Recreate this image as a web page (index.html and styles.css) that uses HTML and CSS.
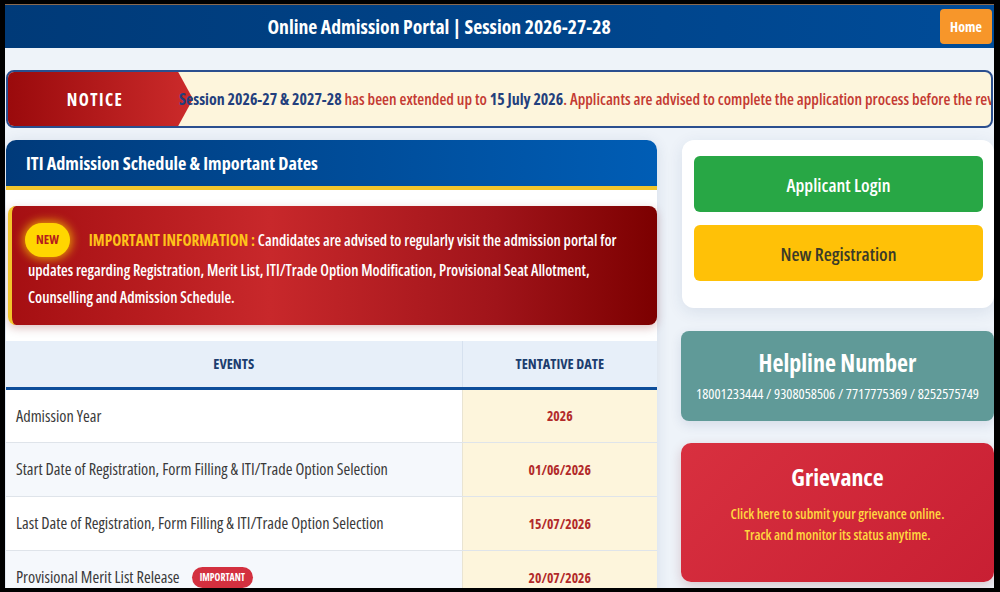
FILE: index.html
```html
<!DOCTYPE html>
<html lang="en">
<head>
  <meta charset="UTF-8" />
  <title>Online Admission Portal</title>
  <meta name="viewport" content="width=device-width, initial-scale=1.0" />
  <link rel="stylesheet" href="styles.css">
</head>
<body>
  <div class="frame">
    <header class="topbar">
      <h1 class="portal-title">Online Admission Portal | Session 2026-27-28</h1>
      <a href="#" class="home-btn">Home</a>
    </header>

    <main class="page">
      <!-- notice strip -->
      <div class="notice">
        <div class="notice-label">NOTICE</div>
        <div class="notice-text">
          <b class="hl">Session 2026-27 &amp; 2027-28</b> has been extended up to <b class="hl">15 July 2026</b>. Applicants are advised to complete the application process before the revised last date.
        </div>
      </div>

      <div class="content">
        <section class="schedule">
          <div class="schedule-head">ITI Admission Schedule &amp; Important Dates</div>

          <div class="info-box">
            <span class="new-badge">NEW</span>
            <span class="info-title">IMPORTANT INFORMATION :</span> Candidates are advised to regularly visit the admission portal for updates regarding Registration, Merit List, ITI/Trade Option Modification, Provisional Seat Allotment, Counselling and Admission Schedule.
          </div>

          <table class="dates">
            <thead>
              <tr><th>Events</th><th class="col-date">Tentative Date</th></tr>
            </thead>
            <tbody>
              <tr><td>Admission Year</td><td class="date">2026</td></tr>
              <tr><td>Start Date of Registration, Form Filling &amp; ITI/Trade Option Selection</td><td class="date">01/06/2026</td></tr>
              <tr><td>Last Date of Registration, Form Filling &amp; ITI/Trade Option Selection</td><td class="date">15/07/2026</td></tr>
              <tr><td>Provisional Merit List Release <span class="imp-badge">Important</span></td><td class="date">20/07/2026</td></tr>
            </tbody>
          </table>
        </section>

        <aside class="side">
          <div class="login-card">
            <a href="#" class="btn btn-green">Applicant Login</a>
            <a href="#" class="btn btn-yellow">New Registration</a>
          </div>

          <div class="helpline">
            <h2>Helpline Number</h2>
            <p>18001233444 / 9308058506 / 7717775369 / 8252575749</p>
          </div>

          <a href="#" class="grievance">
            <h2>Grievance</h2>
            <p>Click here to submit your grievance online.</p>
            <p>Track and monitor its status anytime.</p>
          </a>
        </aside>
      </div>
    </main>
  </div>
</body>
</html>
```

FILE: styles.css
```css
* { box-sizing: border-box; margin: 0; padding: 0; }

body {
  font-family: 'Open Sans', 'Noto Sans', sans-serif;
  font-stretch: 75%;
  background: #000;
  color: #333;
}

.frame {
  margin: 4px 6px 0 5px;
  height: 584px;
  overflow: hidden;
  border-top: 1px solid #8a6a50;
  background: #eef3f9;
}

.topbar {
  height: 43px;
  display: flex;
  align-items: center;
  background: linear-gradient(90deg, #003a78, #004c99);
}

.portal-title {
  flex: 1;
  text-align: center;
  color: #fff;
  font-size: 19.7px;
  font-weight: 700;
  margin-right: 67px;
}

.home-btn {
  width: 52px;
  height: 35px;
  margin-right: 2px;
  display: flex;
  align-items: center;
  justify-content: center;
  background: #f7962a;
  border-radius: 4px;
  color: #fff;
  font-size: 14px;
  font-weight: 700;
  text-decoration: none;
}

.page {
  padding: 22px 0 0 1px;
}

/* notice */
.notice {
  position: relative;
  height: 58px;
  margin-right: 1px;
  border: 2px solid #2b4f8f;
  border-radius: 8px;
  background: #fdf5dc;
  overflow: hidden;
  display: flex;
  align-items: center;
}

.notice-label {
  position: absolute;
  left: 0; top: 0;
  width: 185px;
  height: 100%;
  padding-right: 11px;
  display: flex;
  align-items: center;
  justify-content: center;
  background: linear-gradient(90deg, #9a0a0c, #cc2b2b);
  clip-path: polygon(0 0, 92% 0, 100% 50%, 92% 100%, 0 100%);
  color: #fff;
  font-size: 17px;
  font-weight: 700;
  letter-spacing: 1.4px;
}

.notice-text {
  position: relative;
  padding-left: 171px;
  white-space: nowrap;
  color: #c43a32;
  font-size: 15.9px;
  font-weight: 600;
}

.notice-text .hl {
  color: #233f7d;
  font-weight: 700;
}

/* two columns */
.content {
  display: flex;
  gap: 25px;
  margin-top: 12px;
}

.schedule {
  width: 651px;
  flex-shrink: 0;
  background: #fff;
  border-radius: 10px 10px 0 0;
  box-shadow: 0 2px 14px rgba(30, 60, 110, 0.12);
}

.schedule-head {
  height: 50px;
  padding: 0 20px;
  display: flex;
  align-items: center;
  background: linear-gradient(90deg, #003a7a, #005db5);
  border-bottom: 4px solid #f2c52c;
  border-radius: 10px 10px 0 0;
  color: #fff;
  font-size: 18.2px;
  font-weight: 700;
}

.info-box {
  margin: 16px 0 0 2px;
  padding: 20px 20px 14px 16px;
  background: linear-gradient(90deg, #a50f12, #c8282b 40%, #a0141a 75%, #7c0000);
  border-left: 4px solid #f2c52c;
  border-radius: 8px;
  box-shadow: 0 3px 10px rgba(120, 0, 0, 0.25);
  color: #fff;
  font-size: 15.3px;
  font-weight: 600;
  line-height: 27px;
}

.new-badge {
  display: inline-block;
  vertical-align: middle;
  margin: -3px 16px 0 -3px;
  width: 45px;
  height: 34px;
  line-height: 34px;
  text-align: center;
  background: #ffd600;
  border-radius: 17px;
  box-shadow: 0 0 10px 2px rgba(255, 214, 0, 0.7);
  color: #b51c1c;
  font-size: 12.5px;
  font-weight: 700;
}

.info-title {
  color: #ffc21a;
  font-weight: 700;
}

/* table */
.dates {
  width: 100%;
  margin-top: 16px;
  border-collapse: collapse;
}

.dates th {
  height: 47px;
  background: #e7eff9;
  border-bottom: 3px solid #0d4d9a;
  color: #1c3d6e;
  font-size: 14.3px;
  font-weight: 700;
  text-transform: uppercase;
}

.dates th.col-date {
  width: 195px;
  border-left: 1px solid #d6e1ef;
}

.dates td {
  height: 54px;
  padding: 0 10px;
  border-bottom: 1px solid #dfe4ea;
  font-size: 16.3px;
  color: #3a3a3a;
}

.dates tbody tr:nth-child(even) td {
  background: #f5f8fc;
}

.dates td.date,
.dates tbody tr:nth-child(even) td.date {
  background: #fdf5dc;
  border-left: 1px solid #e9e4d2;
  text-align: center;
  color: #b22a2a;
  font-size: 13.7px;
  font-weight: 700;
}

.imp-badge {
  display: inline-block;
  vertical-align: middle;
  margin: -2px 0 0 9px;
  padding: 0 8px;
  height: 21px;
  line-height: 21px;
  background: #d3303f;
  border-radius: 11px;
  color: #fff;
  font-size: 9.8px;
  font-weight: 700;
  text-transform: uppercase;
}

/* right column */
.side {
  width: 312px;
  flex-shrink: 0;
  display: flex;
  flex-direction: column;
}

.login-card {
  height: 168px;
  padding: 16px 11px 0 12px;
  background: #fff;
  border-radius: 12px;
  box-shadow: 0 4px 16px rgba(30, 60, 110, 0.1);
  display: flex;
  flex-direction: column;
  gap: 13px;
}

.btn {
  height: 56px;
  display: flex;
  align-items: center;
  justify-content: center;
  border-radius: 6px;
  font-size: 18.5px;
  font-weight: 600;
  text-decoration: none;
}

.btn-green {
  background: #28a745;
  color: #fff;
}

.btn-yellow {
  background: #ffc107;
  color: #3b3a28;
}

.helpline {
  height: 90px;
  margin-top: 23px;
  margin-left: -1px;
  padding-top: 17px;
  background: #609a98;
  border-radius: 8px;
  box-shadow: 0 4px 12px rgba(30, 60, 110, 0.12);
  text-align: center;
  color: #fff;
}

.helpline h2 {
  font-size: 24px;
  font-weight: 700;
  line-height: 30px;
}

.helpline p {
  margin-top: 6px;
  font-size: 14.4px;
}

.grievance {
  display: block;
  height: 139px;
  margin-top: 22px;
  margin-left: -1px;
  padding-top: 19px;
  background: linear-gradient(135deg, #d8303f, #c81f33);
  border-radius: 10px;
  box-shadow: 0 4px 12px rgba(120, 20, 30, 0.2);
  text-align: center;
  color: #ffd740;
  text-decoration: none;
}

.grievance h2 {
  margin-bottom: 11px;
  color: #fff;
  font-size: 23.8px;
  font-weight: 700;
  line-height: 30px;
}

.grievance p {
  font-size: 13.8px;
  font-weight: 600;
  line-height: 21px;
}
```
